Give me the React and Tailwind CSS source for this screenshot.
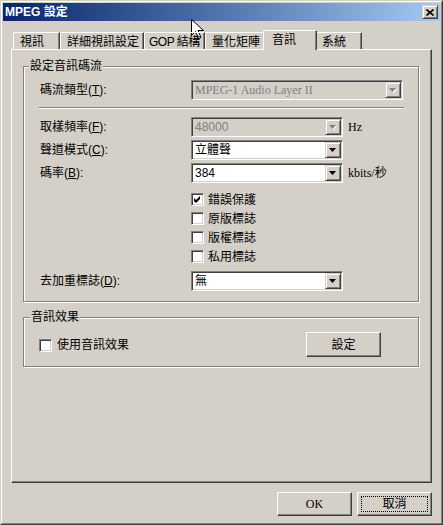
import React from "react";

const sans = "font-['Liberation_Sans','Noto_Sans_CJK_TC',sans-serif]";
const serif = "font-['Liberation_Serif','Noto_Sans_CJK_TC',serif]";

// classic 3D edges
const raised =
    "border border-t-[#d4d0c8] border-l-[#d4d0c8] border-r-[#404040] border-b-[#404040] shadow-[inset_1px_1px_0_#fff,inset_-1px_-1px_0_#808080]";
const sunken =
    "border border-t-[#808080] border-l-[#808080] border-r-white border-b-white shadow-[inset_1px_1px_0_#404040,inset_-1px_-1px_0_#d4d0c8]";
const pushBtn =
    "border border-t-white border-l-white border-r-[#404040] border-b-[#404040] shadow-[inset_-1px_-1px_0_#808080]";

const tabs = [
    { label: "視訊", w: "w-[47px] pl-[6px]" },
    { label: "詳細視訊設定", w: "w-[84px] pl-[6px]" },
    { label: "GOP 結構", w: "w-[61px] pl-[4px] tracking-[-0.5px]" },
    { label: "量化矩陣", w: "w-[60px] pl-[6px]" },
    { label: "音訊", w: "w-[54px] pl-[8px]", active: true },
    { label: "系統", w: "w-[47px] pl-[6px]" },
];

function Arrow({ disabled }) {
    return (
        <div className={`flex h-[16px] w-[16px] shrink-0 items-center justify-center bg-[#d4d0c8] ${raised}`}>
            <svg width="8" height="5" viewBox="0 0 8 5">
                {disabled && <path d="M1 1h7l-3.5 4z" fill="#fff" />}
                <path d="M0 0h7l-3.5 4z" fill={disabled ? "#808080" : "#000"} />
            </svg>
        </div>
    );
}

function Combo({ value, w, disabled, font }) {
    return (
        <div
            className={`flex h-[20px] ${w} items-center p-[1px] ${sunken} ${
                disabled ? "bg-[#d4d0c8] text-[#808080]" : "bg-white text-black"
            }`}
        >
            <span className={`flex-1 pl-[2px] text-[12px] leading-[14px] ${font || sans}`}>{value}</span>
            <Arrow disabled={disabled} />
        </div>
    );
}

function Check({ checked }) {
    return (
        <div className={`flex h-[13px] w-[13px] shrink-0 items-center justify-center bg-white ${sunken}`}>
            {checked && (
                <svg width="7" height="7" viewBox="0 0 7 7">
                    <path d="M0 2L2 4L6 0L6 3L2 7L0 5Z" fill="#000" />
                </svg>
            )}
        </div>
    );
}

function Row({ label, mn, children }) {
    return (
        <div className="flex h-[20px] items-center pl-[16px]">
            <span className="w-[151px] text-[12px] leading-[14px]">
                {label}(<u>{mn}</u>):
            </span>
            {children}
        </div>
    );
}

export default function App() {
    return (
        <div className={`relative h-[525px] w-[443px] bg-[#d4d0c8] text-black ${sans}`}>
            <div className="h-full border border-t-[#d4d0c8] border-l-[#d4d0c8] border-r-[#404040] border-b-[#404040]">
                <div className="h-full border border-t-white border-l-white border-r-[#808080] border-b-[#808080] p-[1px]">
                    {/* Title bar */}
                    <div className="flex h-[18px] items-center justify-between bg-linear-to-r from-[#0a246a] to-[#a6caf0] pl-[2px] pr-[2px]">
                        <span className="text-[12px] font-bold leading-[14px] text-white">MPEG 設定</span>
                        <div className={`flex h-[14px] w-[16px] items-center justify-center bg-[#d4d0c8] ${raised}`}>
                            <svg width="8" height="7" viewBox="0 0 8 7">
                                <path d="M0.5 0.5l7 6M7.5 0.5l-7 6" stroke="#000" strokeWidth="1.6" />
                            </svg>
                        </div>
                    </div>

                    {/* Tabs */}
                    <div className="relative z-10 ml-[10px] mt-[9px] flex h-[19px] items-end">
                        {tabs.map((t) =>
                            t.active ? (
                                <div
                                    key={t.label}
                                    className={`relative z-10 -mx-[2px] -mb-px h-[20px] ${t.w} overflow-hidden whitespace-nowrap rounded-tl-[2px] border-l border-t border-r border-l-white border-t-white border-r-[#404040] bg-[#d4d0c8] pt-[2px] text-[12px] leading-[14px] shadow-[inset_-1px_0_0_#808080]`}
                                >
                                    {t.label}
                                </div>
                            ) : (
                                <div
                                    key={t.label}
                                    className={`h-[17px] ${t.w} overflow-hidden whitespace-nowrap rounded-tl-[2px] border-l border-t border-r border-l-white border-t-white border-r-[#404040] pt-[2px] text-[12px] leading-[14px] shadow-[inset_-1px_0_0_#808080]`}
                                >
                                    {t.label}
                                </div>
                            )
                        )}
                    </div>

                    {/* Tab panel */}
                    <div className="ml-[8px] h-[434px] w-[421px] border border-t-white border-l-white border-r-[#404040] border-b-[#404040] pl-[11px] pt-[16px] shadow-[inset_-1px_-1px_0_#808080]">
                        {/* Stream group */}
                        <div className="relative w-[396px] border border-[#808080] pb-[10px] pt-[13px] shadow-[inset_1px_1px_0_#fff,1px_1px_0_#fff]">
                            <span className="absolute -top-[8px] left-[5px] bg-[#d4d0c8] px-[1px] text-[12px] leading-[14px]">
                                設定音訊碼流
                            </span>
                            <Row label="碼流類型" mn="T">
                                <Combo value="MPEG-1 Audio Layer II" w="w-[212px]" disabled font={serif} />
                            </Row>
                            <div className="ml-[15px] mt-[7px] h-[2px] w-[365px] border-t border-b border-t-[#808080] border-b-white" />
                            <div className="mt-[8px] flex flex-col gap-[3px]">
                                <Row label="取樣頻率" mn="F">
                                    <Combo value="48000" w="w-[152px]" disabled />
                                    <span className={`ml-[5px] text-[12px] leading-[14px] ${serif}`}>Hz</span>
                                </Row>
                                <Row label="聲道模式" mn="C">
                                    <Combo value="立體聲" w="w-[152px]" />
                                </Row>
                                <Row label="碼率" mn="B">
                                    <Combo value="384" w="w-[152px]" />
                                    <span className={`ml-[5px] text-[12px] leading-[14px] ${serif}`}>kbits/秒</span>
                                </Row>
                            </div>
                            <div className="mt-[7px] flex flex-col">
                                {[
                                    ["錯誤保護", true],
                                    ["原版標誌", false],
                                    ["版權標誌", false],
                                    ["私用標誌", false],
                                ].map(([l, c]) => (
                                    <div key={l} className="flex h-[19px] items-center gap-[4px] pl-[167px]">
                                        <Check checked={c} />
                                        <span className="text-[12px] leading-[14px]">{l}</span>
                                    </div>
                                ))}
                            </div>
                            <div className="mt-[5px]">
                                <Row label="去加重標誌" mn="D">
                                    <Combo value="無" w="w-[152px]" />
                                </Row>
                            </div>
                        </div>

                        {/* Effects group */}
                        <div className="relative mt-[15px] flex h-[50px] w-[396px] items-start justify-between border border-[#808080] pl-[15px] pr-[37px] pt-[14px] shadow-[inset_1px_1px_0_#fff,1px_1px_0_#fff]">
                            <span className="absolute -top-[8px] left-[6px] bg-[#d4d0c8] px-[1px] text-[12px] leading-[14px]">
                                音訊效果
                            </span>
                            <div className="mt-[6px] flex items-center gap-[5px]">
                                <Check />
                                <span className="text-[12px] leading-[14px]">使用音訊效果</span>
                            </div>
                            <button className={`flex h-[25px] w-[75px] items-center justify-center bg-[#d4d0c8] text-[12px] leading-[14px] ${pushBtn}`}>
                                設定
                            </button>
                        </div>
                    </div>

                    {/* Dialog buttons */}
                    <div className="mt-[9px] flex justify-end gap-[5px] pr-[8px]">
                        <button className={`flex h-[24px] w-[75px] items-center justify-center bg-[#d4d0c8] text-[12px] leading-[14px] ${serif} ${pushBtn}`}>
                            OK
                        </button>
                        <button className={`flex h-[24px] w-[75px] items-center justify-center bg-[#d4d0c8] p-[3px] text-[12px] leading-[14px] ${pushBtn}`}>
                            <span className="flex h-full w-full items-center justify-center border border-dotted border-black">
                                取消
                            </span>
                        </button>
                    </div>
                </div>
            </div>

            {/* Mouse pointer */}
            <svg className="absolute left-[191px] top-[19px]" width="13" height="21" viewBox="0 0 13 21">
                <path
                    d="M0.5 0.5V16.5L4.5 12.5L7.5 19.5L10 18.5L7 11.5H12.5Z"
                    fill="#fff"
                    stroke="#000"
                    strokeWidth="1"
                    strokeLinejoin="miter"
                />
            </svg>
        </div>
    );
}
